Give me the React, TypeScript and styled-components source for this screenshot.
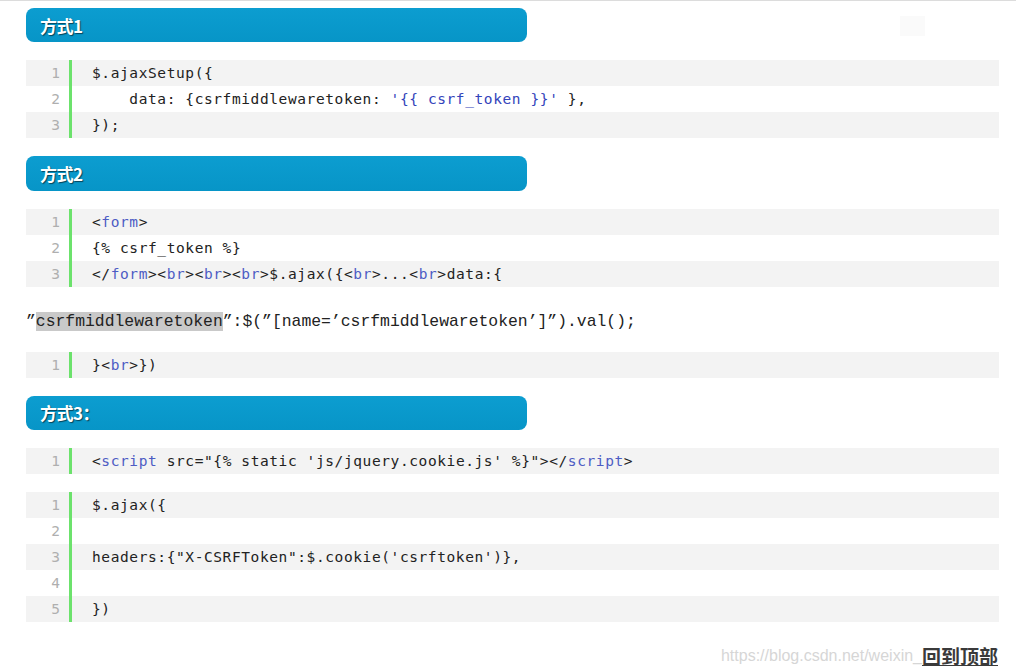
import React from "react";
import styled, { createGlobalStyle } from "styled-components";

const Global = createGlobalStyle`
  html, body {
    margin: 0;
    padding: 0;
    background: #fff;
  }
  body {
    font-family: "Liberation Sans", Arial, sans-serif;
  }
`;

type Tok = { t: string; c?: "kw" | "str" };
type Line = Tok[];

const Page = styled.div`
  position: relative;
  width: 1016px;
  height: 669px;
  box-sizing: border-box;
  border-top: 1px solid #dcdcdc;
  padding: 7px 17px 0 26px;
  display: flex;
  flex-direction: column;
  gap: 18px;
  overflow: hidden;
`;

const Ghost = styled.div`
  position: absolute;
  top: 15px;
  left: 900px;
  width: 25px;
  height: 20px;
  background: #fafafa;
`;

const TitleBar = styled.div`
  width: 501px;
  height: 35px;
  box-sizing: border-box;
  border-radius: 8px;
  background: linear-gradient(#0c9dd0, #0795c7);
  display: flex;
  align-items: center;
  padding-left: 14px;
  color: #fff;
  font-family: "Noto Sans CJK SC", "Noto Sans", sans-serif;
  font-weight: 700;
  font-size: 17px;
  letter-spacing: -0.5px;
  text-shadow: 1px 1px 1px rgba(0, 0, 0, 0.55);
`;

const Block = styled.div`
  width: 973px;
  display: flex;
  flex-direction: column;
`;

const Row = styled.div<{ $odd: boolean }>`
  height: 26px;
  display: flex;
  align-items: center;
  background: ${(p) => (p.$odd ? "#f3f3f3" : "#fff")};
  font-family: "DejaVu Sans Mono", "Liberation Mono", monospace;
  font-size: 14.5px;
`;

const Num = styled.span`
  width: 46px;
  box-sizing: border-box;
  padding-right: 9px;
  color: #afafaf;
  align-self: stretch;
  display: flex;
  align-items: center;
  justify-content: flex-end;
  border-right: 3px solid #6ce26c;
`;

const Code = styled.span`
  padding-left: 20px;
  color: #222;
  white-space: pre;
  letter-spacing: 0.6px;
`;

const Kw = styled.span<{ $c?: string }>`
  color: ${(p) => (p.$c === "str" ? "#3344bb" : "#4d5cc4")};
`;

const Prose = styled.div`
  height: 25px;
  padding-top: 4px;
  line-height: 25px;
  font-family: "Liberation Mono", "Courier New", monospace;
  font-size: 16.4px;
  color: #222;
  white-space: pre;
`;

const Mark = styled.span`
  background: #c9c9c9;
`;

const Footer = styled.div`
  margin-top: 3px;
  width: 972px;
  height: 26px;
  display: flex;
  justify-content: flex-end;
  align-items: center;
`;

const Watermark = styled.span`
  font-family: "Liberation Sans", Arial, sans-serif;
  font-size: 16px;
  color: #d6d6d6;
  white-space: nowrap;
`;

const BackTop = styled.a`
  font-family: "Noto Sans CJK SC", sans-serif;
  font-size: 19px;
  font-weight: 700;
  color: #3a3a3a;
  text-decoration: underline;
  letter-spacing: 0;
`;

const CodeBlock = ({ lines }: { lines: Line[] }) => (
  <Block>
    {lines.map((l, i) => (
      <Row key={i} $odd={i % 2 === 0}>
        <Num>{i + 1}</Num>
        <Code>
          {l.map((tok, j) =>
            tok.c ? (
              <Kw key={j} $c={tok.c}>
                {tok.t}
              </Kw>
            ) : (
              <React.Fragment key={j}>{tok.t}</React.Fragment>
            )
          )}
        </Code>
      </Row>
    ))}
  </Block>
);

const block1: Line[] = [
  [{ t: "$.ajaxSetup({" }],
  [{ t: "    data: {csrfmiddlewaretoken: " }, { t: "'{{ csrf_token }}'", c: "str" }, { t: " }," }],
  [{ t: "});" }],
];

const block2: Line[] = [
  [{ t: "<" }, { t: "form", c: "kw" }, { t: ">" }],
  [{ t: "{% csrf_token %}" }],
  [
    { t: "</" },
    { t: "form", c: "kw" },
    { t: "><" },
    { t: "br", c: "kw" },
    { t: "><" },
    { t: "br", c: "kw" },
    { t: "><" },
    { t: "br", c: "kw" },
    { t: ">$.ajax({<" },
    { t: "br", c: "kw" },
    { t: ">...<" },
    { t: "br", c: "kw" },
    { t: ">data:{" },
  ],
];

const block2b: Line[] = [[{ t: "}<" }, { t: "br", c: "kw" }, { t: ">})" }]];

const block3a: Line[] = [
  [
    { t: "<" },
    { t: "script", c: "kw" },
    { t: " src=\"{% static 'js/jquery.cookie.js' %}\"></" },
    { t: "script", c: "kw" },
    { t: ">" },
  ],
];

const block3b: Line[] = [
  [{ t: "$.ajax({" }],
  [{ t: "" }],
  [{ t: "headers:{\"X-CSRFToken\":$.cookie('csrftoken')}," }],
  [{ t: "" }],
  [{ t: "})" }],
];

export default function App() {
  return (
    <>
      <Global />
      <Page>
        <Ghost />
        <TitleBar>方式1</TitleBar>
        <CodeBlock lines={block1} />
        <TitleBar>方式2</TitleBar>
        <CodeBlock lines={block2} />
        <Prose>
          ”<Mark>csrfmiddlewaretoken</Mark>”:$(”[name=’csrfmiddlewaretoken’]”).val();
        </Prose>
        <CodeBlock lines={block2b} />
        <TitleBar>方式3：</TitleBar>
        <CodeBlock lines={block3a} />
        <CodeBlock lines={block3b} />
        <Footer>
          <Watermark>https://blog.csdn.net/weixin_</Watermark>
          <BackTop>回到顶部</BackTop>
        </Footer>
      </Page>
    </>
  );
}
